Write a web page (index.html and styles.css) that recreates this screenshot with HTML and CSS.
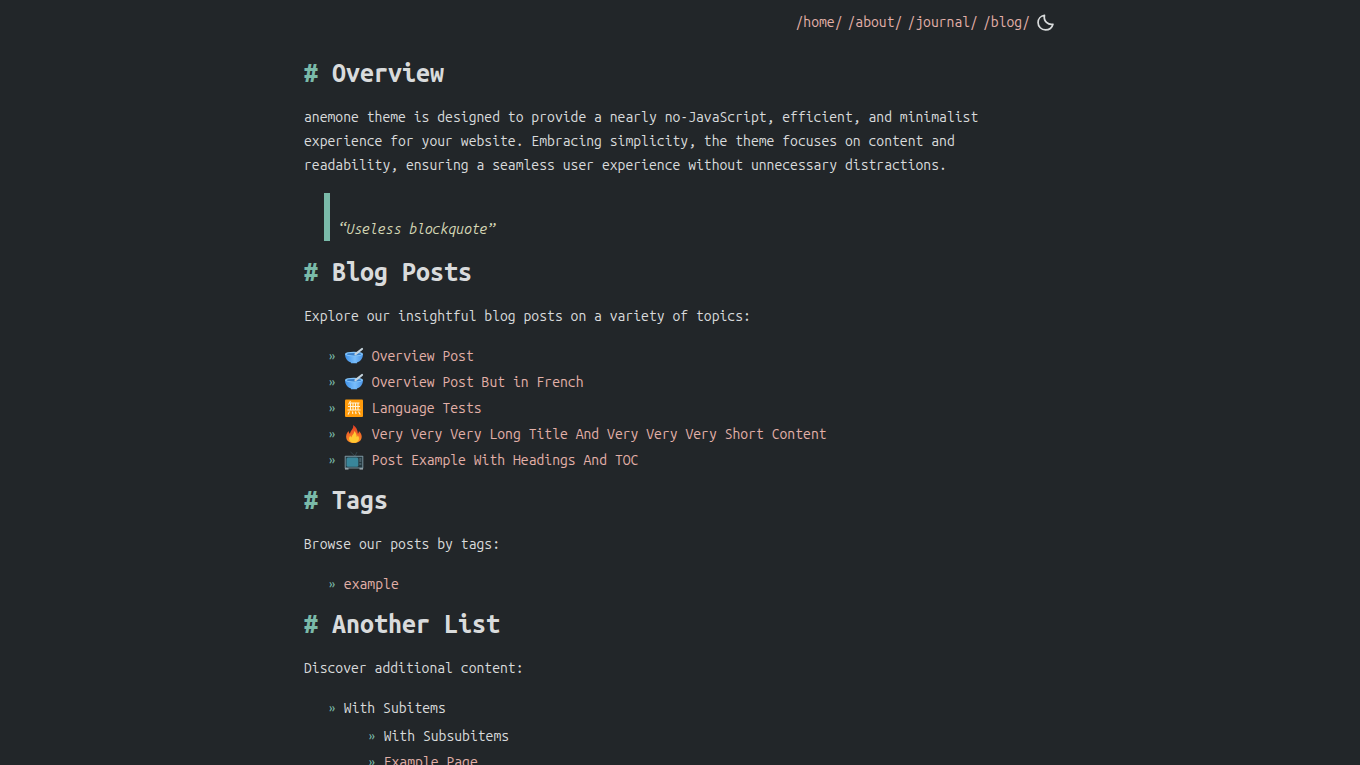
FILE: index.html
```html
<!DOCTYPE html>
<html lang="en">
<head>
<meta charset="utf-8">
<meta name="viewport" content="width=device-width, initial-scale=1">
<title>Anemone</title>
<link rel="stylesheet" href="styles.css">
</head>
<body>
<svg class="defs" aria-hidden="true">
  <defs>
    <linearGradient id="bowl-side" x1="0" x2="1"><stop offset="0" stop-color="#3f91e8"/><stop offset=".55" stop-color="#78bdfa"/><stop offset="1" stop-color="#4a93e5"/></linearGradient>
    <linearGradient id="flame-fill" x1="0" y1="0" x2="0" y2="1"><stop offset="0" stop-color="#e23b25"/><stop offset="1" stop-color="#ff9328"/></linearGradient>
    <symbol id="bowl" viewBox="0 0 20 20">
      <path d="M1 8c0 5 3 7.500 6 8.500v.8h6v-.8C16 15.500 19 13 19 8z" fill="url(#bowl-side)"/>
      <ellipse cx="10" cy="8" rx="9" ry="2.300" fill="#83c5fb"/>
      <ellipse cx="10" cy="8.200" rx="7.400" ry="1.200" fill="#3a7fc8"/>
      <path d="M11.500 8.200 18 3" stroke="#c5d3dc" stroke-width="2.200" stroke-linecap="round"/>
    </symbol>
    <symbol id="square" viewBox="0 0 20 20">
      <rect x="1" y="1.500" width="18" height="17.500" rx="1" fill="#ff9b0b"/>
      <path d="M6.500 3 4.500 6.500M6 5h9.500M4 8.500h12M3.500 12h13M6.500 5v7M9 5v7M11.500 5v7M14 5v7M5.500 13.500l-1.500 3M8.500 13.500l.3 2.500M11.500 13.500l.6 2.500M14.500 13.500l1.700 3" stroke="#fff4dc" stroke-width="1.100" fill="none"/>
    </symbol>
    <symbol id="flame" viewBox="0 0 20 20">
      <path d="M9 1c.8 3-1 4.500-2.300 6.400C6.300 8.100 6 9 6 9.800 5 9 4.700 8 4.800 7 2.500 9 1.800 11.500 2.300 14c.6 3.200 3.700 5 7.700 5 4.500 0 7.700-2.300 7.700-6.500 0-2.300-1.200-4-2.800-5.500 0 1.200-.3 2-1 2.700C13.700 6 12 2.500 9 1z" fill="url(#flame-fill)"/>
      <path d="M10.200 7c.2 2-1 3-2 4.500-.5.700-.6 1.300-.6 1.900-.8-.4-1.100-1-1.100-1.700-1.200 1-1.600 2.300-1.300 3.700.4 2 2.300 3.300 4.800 3.300 3 0 5-1.500 5-4.200 0-1.400-.6-2.300-1.300-3-.1.800-.4 1.300-1 1.600C12.600 10.700 12 8.500 10.200 7z" fill="#ffca32"/>
    </symbol>
    <symbol id="tv" viewBox="0 0 20 20">
      <path d="M6.500 2 11 6 13 2" stroke="#34464e" fill="none"/>
      <rect x=".7" y="5.800" width="18.600" height="12.700" rx=".6" fill="#78919c"/>
      <rect x="1.700" y="6.800" width="16.600" height="10.700" fill="#253940"/>
      <rect x="2.500" y="7.500" width="11.800" height="9.200" rx="1.500" fill="#39869b"/>
      <path d="M15.300 9h2M15.300 11h2M15.300 14h2" stroke="#6b8691"/>
      <path d="M1 18.800h3.500M15.500 18.800H19" stroke="#a9b8c0" stroke-width="1.200"/>
    </symbol>
  </defs>
</svg>
<div class="page">
  <header class="site-header">
    <nav class="site-nav">
      <a href="#home">/home/</a>
      <a href="#about">/about/</a>
      <a href="#journal">/journal/</a>
      <a href="#blog">/blog/</a>
    </nav>
    <button class="theme-toggle" type="button" aria-label="Toggle theme">
      <svg class="moon" viewBox="0 0 16 16" aria-hidden="true"><path d="M7 1.200C3.500 1.700 1 4.500 1 8a7 7 0 0 0 7 7c3.400 0 6.200-2.200 7-5.300C10.500 10.500 6 7 7 1.200Z" fill="none" stroke="currentColor" stroke-width="1.600" stroke-linejoin="round"/></svg>
    </button>
  </header>
  <main>
    <h1 class="heading"><span class="hash">#</span> Overview</h1>
    <p class="text">anemone theme is designed to provide a nearly no-JavaScript, efficient, and minimalist experience for your website. Embracing simplicity, the theme focuses on content and readability, ensuring a seamless user experience without unnecessary distractions.</p>
    <blockquote class="quote">“Useless blockquote”</blockquote>
    <h1 class="heading"><span class="hash">#</span> Blog Posts</h1>
    <p class="text">Explore our insightful blog posts on a variety of topics:</p>
    <ul class="list">
      <li class="item"><span class="mark">»</span><a class="post" href="#p1"><svg class="emoji" aria-hidden="true"><use href="#bowl"/></svg>Overview Post</a></li>
      <li class="item"><span class="mark">»</span><a class="post" href="#p2"><svg class="emoji" aria-hidden="true"><use href="#bowl"/></svg>Overview Post But in French</a></li>
      <li class="item"><span class="mark">»</span><a class="post" href="#p3"><svg class="emoji" aria-hidden="true"><use href="#square"/></svg>Language Tests</a></li>
      <li class="item"><span class="mark">»</span><a class="post" href="#p4"><svg class="emoji" aria-hidden="true"><use href="#flame"/></svg>Very Very Very Long Title And Very Very Very Short Content</a></li>
      <li class="item"><span class="mark">»</span><a class="post" href="#p5"><svg class="emoji" aria-hidden="true"><use href="#tv"/></svg>Post Example With Headings And TOC</a></li>
    </ul>
    <h1 class="heading"><span class="hash">#</span> Tags</h1>
    <p class="text">Browse our posts by tags:</p>
    <ul class="list">
      <li class="item"><span class="mark">»</span><a href="#example">example</a></li>
    </ul>
    <h1 class="heading"><span class="hash">#</span> Another List</h1>
    <p class="text">Discover additional content:</p>
    <ul class="list">
      <li class="item"><span class="mark">»</span><div>With Subitems
        <ul class="sublist">
          <li class="item"><span class="mark">»</span>With Subsubitems</li>
          <li class="item"><span class="mark">»</span><a href="#page">Example Page</a></li>
        </ul></div>
      </li>
    </ul>
  </main>
</div>
</body>
</html>
```

FILE: styles.css
```css
* {
  box-sizing: border-box;
}

html {
  background: #222629;
  scrollbar-width: none;
}

body {
  margin: 0;
  color: #d9dbdc;
  font-family: "Ubuntu Mono", "Noto Sans Mono CJK SC", "Noto Sans Mono CJK JP", "Liberation Mono", monospace;
  font-size: 14px;
  line-height: 24px;
}

a {
  color: #e3b0a8;
  text-decoration: none;
}

a:hover {
  text-decoration: underline;
}

.defs {
  position: absolute;
  width: 0;
  height: 0;
}

.page {
  max-width: 784px;
  margin: 0 auto;
  padding: 10px 16px 32px;
}

.site-header {
  display: flex;
  justify-content: flex-end;
  align-items: center;
  gap: 5px;
  margin-bottom: 23px;
}

.site-nav {
  display: flex;
  flex-wrap: wrap;
  gap: 5px;
}

.theme-toggle {
  display: flex;
  padding: 2px;
  border: 0;
  background: none;
  color: #d9dbdc;
  cursor: pointer;
}

.moon {
  width: 17px;
  height: 17px;
}

.heading {
  margin: 0 0 16px;
  font-size: 25px;
  line-height: 32px;
  font-weight: 700;
}

.hash,
.mark {
  color: #7abaa9;
}

.text {
  max-width: 94ch;
  margin: 0 0 16px;
}

.quote {
  margin: 0 20px 15px;
  padding: 24px 0 0 8px;
  border-left: 6px solid #7abaa9;
  color: #d5d7b5;
  font-style: italic;
}

.list,
.sublist {
  display: flex;
  flex-direction: column;
  gap: 2px;
  margin: 0 0 12px;
  padding: 0 0 0 24px;
  list-style: none;
}

.sublist {
  margin-top: 4px;
}

.item {
  display: flex;
  gap: 8px;
}

.post {
  display: flex;
  align-items: center;
  gap: 8px;
}

.emoji {
  flex: none;
  width: 20px;
  height: 20px;
}
```
